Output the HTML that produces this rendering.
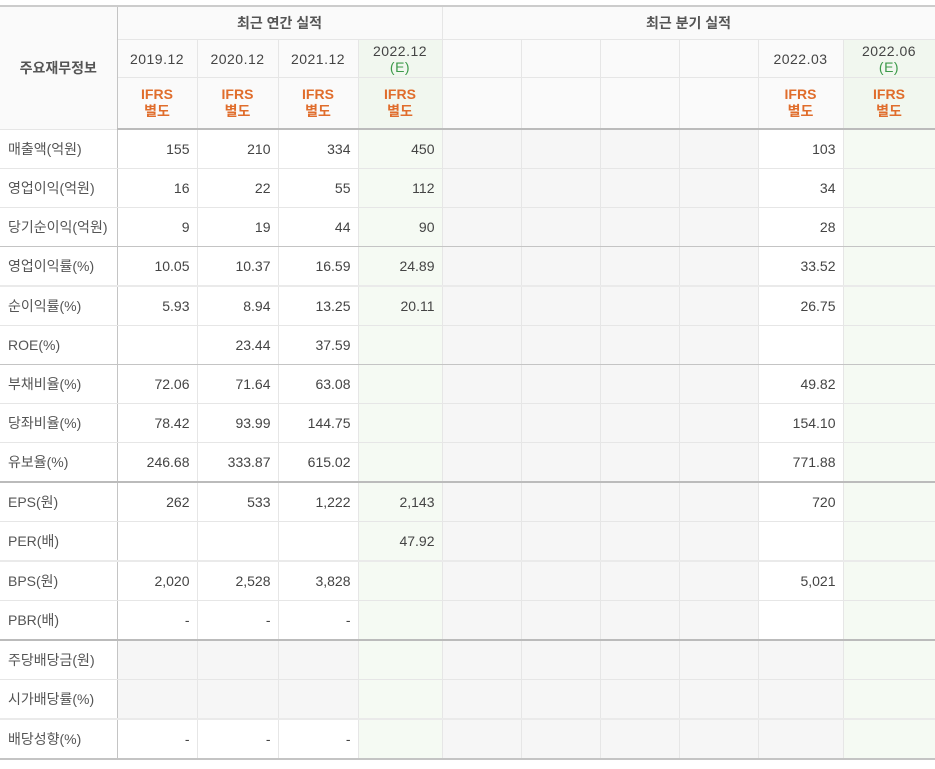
<!DOCTYPE html>
<html><head><meta charset="utf-8"><style>
html,body{margin:0;padding:0;background:#fff;}
body{width:935px;height:769px;overflow:hidden;font-family:"Liberation Sans","Noto Sans CJK KR",sans-serif;}
table{position:absolute;left:0;top:5px;border-collapse:collapse;table-layout:fixed;width:935px;}
td,th{border:1px solid #e6e6e6;padding:0;font-size:14px;color:#444;overflow:hidden;white-space:nowrap;}
th{font-weight:normal;background:#fafafa;text-align:center;}
tr.h1 th{height:32px;font-weight:bold;color:#555;font-size:14px;}
tr.h2 th{height:37px;letter-spacing:0.5px;line-height:16px;}
tr.h3 th{height:50px;}
.lab{background:#fafafa;font-weight:bold;color:#555;}
.ifrs{color:#e06d2c;font-weight:bold;line-height:17px;}
.e{color:#3c9a4a;}
th.g{background:#f1f7ef;}
td{height:38px;text-align:right;padding-right:7px;color:#444;}
td.l{text-align:left;padding-left:8px;padding-right:0;color:#555;}
td.g{background:#f5faf3;}
td.s{background:#f6f6f6;}
tr.h3 th{border-bottom:2px solid #bbb;}
tr.t td{border-bottom:2px solid #bbb;}
tr.m td{border-bottom:1px solid #c4c4c4;}
tr.lt td{border-bottom:2px solid #eaeaea;}
.sep{border-left:1px solid #c4c4c4;}
table{border-top:2px solid #ccc;}
tr.last td{border-bottom:2px solid #c4c4c4;}
th.sep2{border-left:1px solid #c4c4c4;}
td.l{border-left:0;border-right:1px solid #c4c4c4;}
</style></head><body>
<table>
<colgroup><col style="width:117px"><col style="width:80px"><col style="width:81px"><col style="width:80px"><col style="width:84px"><col style="width:79px"><col style="width:79px"><col style="width:79px"><col style="width:79px"><col style="width:85px"><col style="width:92px"></colgroup>
<tr class="h1"><th rowspan="3" class="lab" style="border-left:0;border-right:1px solid #c4c4c4">주요재무정보</th><th colspan="4">최근 연간 실적</th><th colspan="6" class="sep2">최근 분기 실적</th></tr>
<tr class="h2"><th>2019.12</th><th>2020.12</th><th>2021.12</th><th class="g">2022.12<br><span class="e">(E)</span></th><th class="sep2"></th><th></th><th></th><th></th><th>2022.03</th><th class="g">2022.06<br><span class="e">(E)</span></th></tr>
<tr class="h3"><th class="ifrs">IFRS<br>별도</th><th class="ifrs">IFRS<br>별도</th><th class="ifrs">IFRS<br>별도</th><th class="ifrs g">IFRS<br>별도</th><th class="sep2"></th><th></th><th></th><th></th><th class="ifrs">IFRS<br>별도</th><th class="ifrs g">IFRS<br>별도</th></tr>

<tr><td class="l">매출액(억원)</td><td>155</td><td>210</td><td>334</td><td class="g">450</td><td class="s sep"></td><td class="s"></td><td class="s"></td><td class="s"></td><td>103</td><td class="g"></td></tr>
<tr><td class="l">영업이익(억원)</td><td>16</td><td>22</td><td>55</td><td class="g">112</td><td class="s sep"></td><td class="s"></td><td class="s"></td><td class="s"></td><td>34</td><td class="g"></td></tr>
<tr class="m"><td class="l">당기순이익(억원)</td><td>9</td><td>19</td><td>44</td><td class="g">90</td><td class="s sep"></td><td class="s"></td><td class="s"></td><td class="s"></td><td>28</td><td class="g"></td></tr>
<tr class="lt"><td class="l">영업이익률(%)</td><td>10.05</td><td>10.37</td><td>16.59</td><td class="g">24.89</td><td class="s sep"></td><td class="s"></td><td class="s"></td><td class="s"></td><td>33.52</td><td class="g"></td></tr>
<tr><td class="l">순이익률(%)</td><td>5.93</td><td>8.94</td><td>13.25</td><td class="g">20.11</td><td class="s sep"></td><td class="s"></td><td class="s"></td><td class="s"></td><td>26.75</td><td class="g"></td></tr>
<tr class="m"><td class="l">ROE(%)</td><td></td><td>23.44</td><td>37.59</td><td class="g"></td><td class="s sep"></td><td class="s"></td><td class="s"></td><td class="s"></td><td></td><td class="g"></td></tr>
<tr><td class="l">부채비율(%)</td><td>72.06</td><td>71.64</td><td>63.08</td><td class="g"></td><td class="s sep"></td><td class="s"></td><td class="s"></td><td class="s"></td><td>49.82</td><td class="g"></td></tr>
<tr><td class="l">당좌비율(%)</td><td>78.42</td><td>93.99</td><td>144.75</td><td class="g"></td><td class="s sep"></td><td class="s"></td><td class="s"></td><td class="s"></td><td>154.10</td><td class="g"></td></tr>
<tr class="t"><td class="l">유보율(%)</td><td>246.68</td><td>333.87</td><td>615.02</td><td class="g"></td><td class="s sep"></td><td class="s"></td><td class="s"></td><td class="s"></td><td>771.88</td><td class="g"></td></tr>
<tr><td class="l">EPS(원)</td><td>262</td><td>533</td><td>1,222</td><td class="g">2,143</td><td class="s sep"></td><td class="s"></td><td class="s"></td><td class="s"></td><td>720</td><td class="g"></td></tr>
<tr class="lt"><td class="l">PER(배)</td><td></td><td></td><td></td><td class="g">47.92</td><td class="s sep"></td><td class="s"></td><td class="s"></td><td class="s"></td><td></td><td class="g"></td></tr>
<tr><td class="l">BPS(원)</td><td>2,020</td><td>2,528</td><td>3,828</td><td class="g"></td><td class="s sep"></td><td class="s"></td><td class="s"></td><td class="s"></td><td>5,021</td><td class="g"></td></tr>
<tr class="t"><td class="l">PBR(배)</td><td>-</td><td>-</td><td>-</td><td class="g"></td><td class="s sep"></td><td class="s"></td><td class="s"></td><td class="s"></td><td></td><td class="g"></td></tr>
<tr><td class="l">주당배당금(원)</td><td class="s"></td><td class="s"></td><td class="s"></td><td class="g"></td><td class="s sep"></td><td class="s"></td><td class="s"></td><td class="s"></td><td class="s"></td><td class="g"></td></tr>
<tr class="lt"><td class="l">시가배당률(%)</td><td class="s"></td><td class="s"></td><td class="s"></td><td class="g"></td><td class="s sep"></td><td class="s"></td><td class="s"></td><td class="s"></td><td class="s"></td><td class="g"></td></tr>
<tr class="last"><td class="l">배당성향(%)</td><td>-</td><td>-</td><td>-</td><td class="g"></td><td class="s sep"></td><td class="s"></td><td class="s"></td><td class="s"></td><td class="s"></td><td class="g"></td></tr>
</table>
</body></html>
